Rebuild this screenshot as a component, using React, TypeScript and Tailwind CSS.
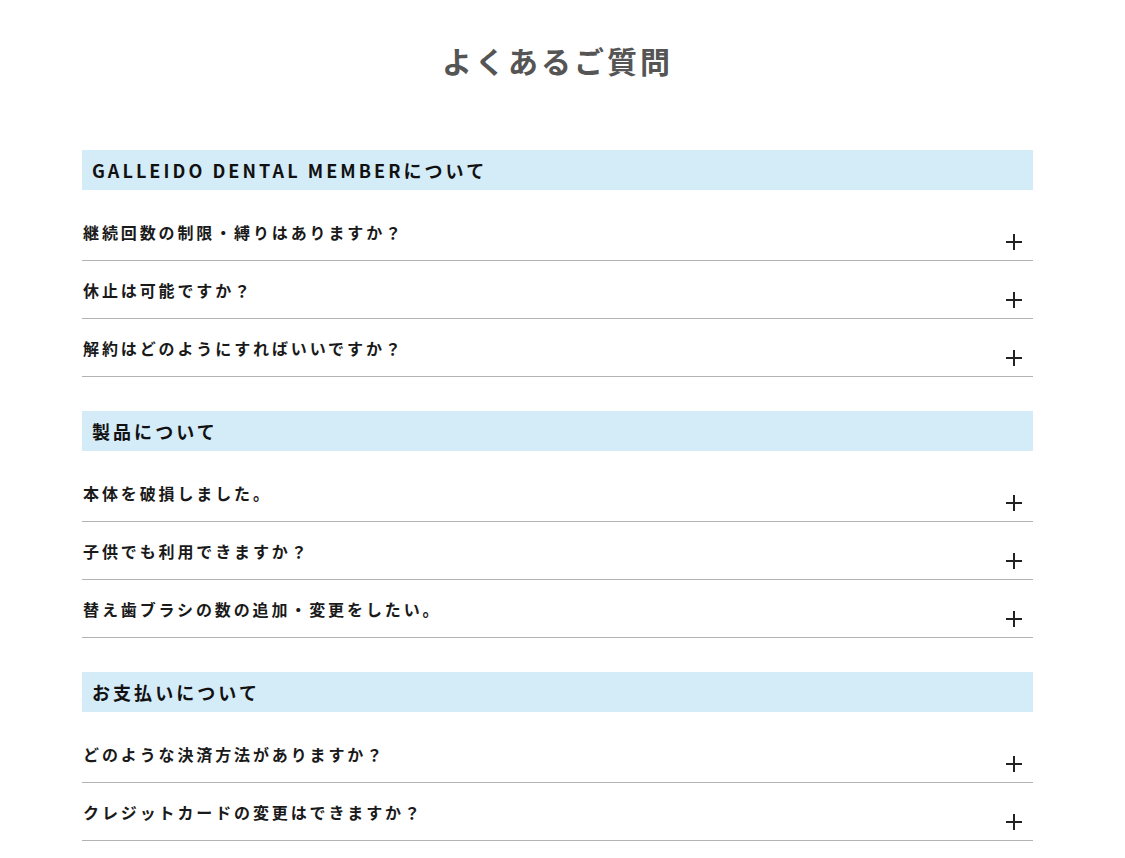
import React, { useState } from "react";

type Section = {
  title: string;
  items: string[];
};

const sections: Section[] = [
  {
    title: "GALLEIDO DENTAL MEMBERについて",
    items: [
      "継続回数の制限・縛りはありますか？",
      "休止は可能ですか？",
      "解約はどのようにすればいいですか？",
    ],
  },
  {
    title: "製品について",
    items: [
      "本体を破損しました。",
      "子供でも利用できますか？",
      "替え歯ブラシの数の追加・変更をしたい。",
    ],
  },
  {
    title: "お支払いについて",
    items: [
      "どのような決済方法がありますか？",
      "クレジットカードの変更はできますか？",
    ],
  },
];

function PlusIcon() {
  return (
    <span className="relative block h-4 w-4 shrink-0">
      <span className="absolute left-0 top-[7px] h-[1.5px] w-4 bg-[#222]" />
      <span className="absolute left-[7px] top-0 h-4 w-[1.5px] bg-[#222]" />
    </span>
  );
}

function FaqRow({ question }: { question: string }) {
  const [open, setOpen] = useState(false);
  return (
    <div className="border-b border-[#b3b3b3]">
      <button
        type="button"
        onClick={() => setOpen(!open)}
        className="flex w-full items-start justify-between pb-[10px] pt-[19px] text-left"
      >
        <span className="pl-px text-[16px] font-bold leading-5 tracking-[0.18em] text-[#1a1a1a]">
          {question}
        </span>
        <span className="mr-[11px] mt-3">
          <PlusIcon />
        </span>
      </button>
    </div>
  );
}

export default function App() {
  return (
    <div
      className="min-h-screen bg-white pb-10"
      style={{ fontFamily: '"Noto Sans CJK JP", "Noto Sans", sans-serif' }}
    >
      <main className="ml-[82px] w-[951px]">
        <h1 className="pt-[38px] text-center text-[30px] font-bold leading-[44px] tracking-[0.1em] text-[#555]">
          よくあるご質問
        </h1>
        <div className="mt-[68px] flex flex-col gap-[34px]">
          {sections.map((section) => (
            <section key={section.title}>
              <h2 className="mb-[13px] flex h-10 items-center bg-[#d4ebf8] pl-[10px] text-[18px] font-bold tracking-[0.17em] text-[#111]">
                {section.title}
              </h2>
              {section.items.map((q) => (
                <FaqRow key={q} question={q} />
              ))}
            </section>
          ))}
        </div>
      </main>
    </div>
  );
}
